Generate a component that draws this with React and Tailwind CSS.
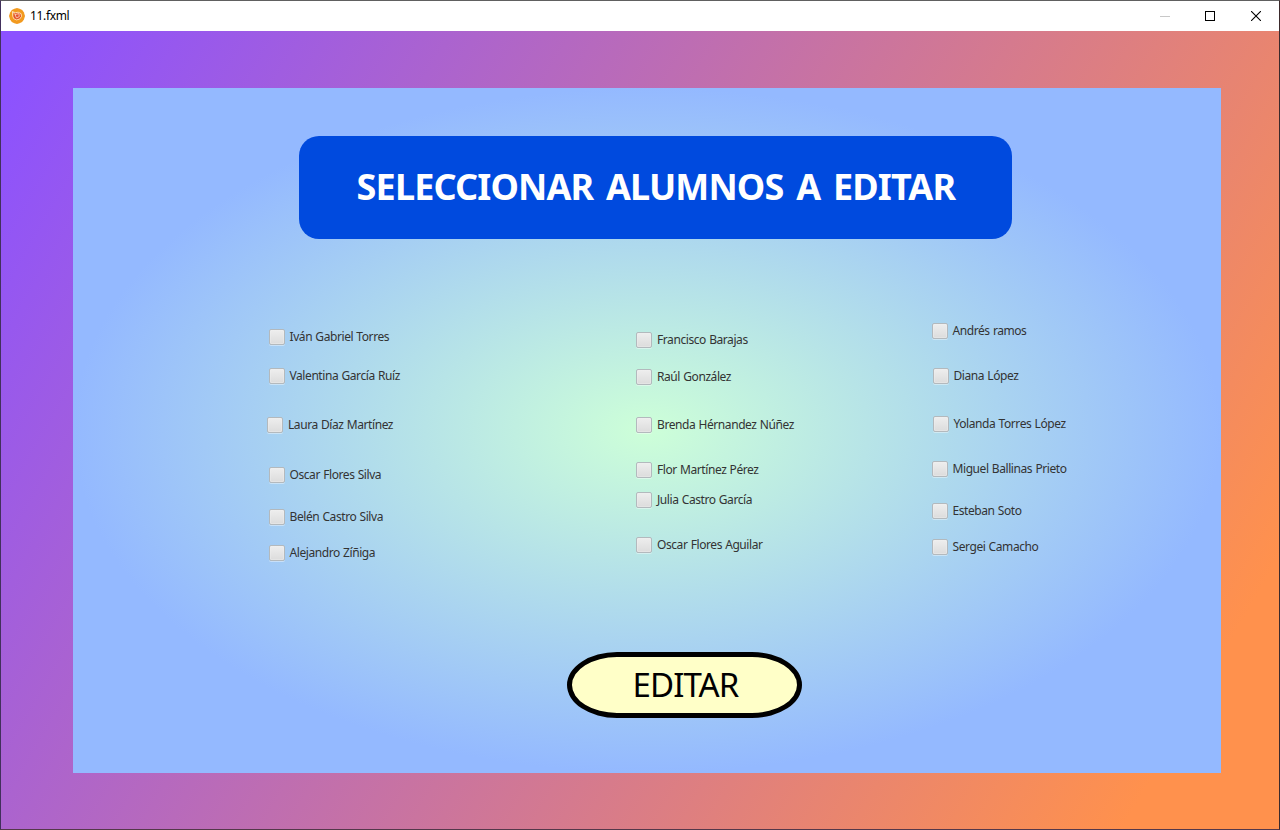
const columns = [
  {
    className: 'ml-[195.5px]',
    students: [
      { name: 'Iván Gabriel Torres', row: 'mt-[3px]' },
      { name: 'Valentina García Ruíz', row: 'mt-[23px]' },
      { name: 'Laura Díaz Martínez', row: 'mt-[33px] -ml-[1.5px]' },
      { name: 'Oscar Flores Silva', row: 'mt-[34px]' },
      { name: 'Belén Castro Silva', row: 'mt-[26px]' },
      { name: 'Alejandro Zíñiga', row: 'mt-[20px]' },
    ],
  },
  {
    className: 'ml-[167.5px]',
    students: [
      { name: 'Francisco Barajas', row: 'mt-[6px]' },
      { name: 'Raúl González', row: 'mt-[21px]' },
      { name: 'Brenda Hérnandez Núñez', row: 'mt-[32px]' },
      { name: 'Flor Martínez Pérez', row: 'mt-[29px]' },
      { name: 'Julia Castro García', row: 'mt-[14px]' },
      { name: 'Oscar Flores Aguilar', row: 'mt-[29px]' },
    ],
  },
  {
    className: 'ml-[95.5px]',
    students: [
      { name: 'Andrés ramos', row: 'mt-[-3px]' },
      { name: 'Diana López', row: 'mt-[29px] ml-px' },
      { name: 'Yolanda Torres López', row: 'mt-[32px] ml-px' },
      { name: 'Miguel Ballinas Prieto', row: 'mt-[29px]' },
      { name: 'Esteban Soto', row: 'mt-[26px]' },
      { name: 'Sergei Camacho', row: 'mt-[20px]' },
    ],
  },
];

function TitleBar() {
  return (
    <header className="flex h-[30px] shrink-0 items-center bg-white">
      <svg className="mb-px ml-2 size-4" viewBox="0 0 16 16" fill="none">
        <path d="M8 0l2.6.7 2.6 1.2 1.6 2.4L16 8l-1.1 3.4-1.8 2.6-2.6 1.3L8 16l-2.7-.8-2.5-1.3-1.7-2.5L0 8l1.1-3.6 1.7-2.5L5.4.7z" fill="#f29a1f" />
        <path d="M4 4.3l2.2.7 2.5-.8 2.8 1.2.7 2.7-1.1 2.6-2.8 1.2-2.9-.8-1.4-2.4.7-2.3z" fill="#e4512b" />
        <path d="M3.4 3.6l3 1.1 2.8-.5 2.9 1.5.4 2.8-1.9 2.6-3.1.8-2.8-1.3-1-2.6z" stroke="#ffe3b8" strokeWidth=".9" />
        <path d="M3.4 3.6l2.6 2.9 4-.9.2 3.1-2.8 1.1-1.4-3.3" stroke="#fff0d8" strokeWidth=".7" />
      </svg>
      <span className="ml-[5px] text-[12px] leading-4 tracking-[-0.35px] text-black">11.fxml</span>
      <div className="ml-auto flex h-full pb-px">
        <button className="flex w-[46px] items-center justify-center" aria-label="Minimizar">
          <svg width="10" height="10" shapeRendering="crispEdges"><path d="M0 5.5h10" stroke="#c8c8c8" /></svg>
        </button>
        <button className="flex w-[45px] items-center justify-center pr-px" aria-label="Maximizar">
          <svg width="10" height="10" shapeRendering="crispEdges"><rect x=".5" y=".5" width="9" height="9" fill="none" stroke="#000" /></svg>
        </button>
        <button className="flex w-[46px] items-center justify-center" aria-label="Cerrar">
          <svg width="10" height="10"><path d="M0 0l10 10M10 0L0 10" stroke="#000" strokeWidth="1.1" /></svg>
        </button>
      </div>
    </header>
  );
}

function Student({ name, row }) {
  return (
    <label className={`flex h-4 items-center gap-[5px] ${row}`}>
      <span className="size-4 shrink-0 rounded-[2px] border border-[#b3b9bd] bg-linear-to-b from-[#eeeeee] to-[#dcdcdc] shadow-[inset_0_0_0_1px_#f1f1f166,0_1px_0_#ffffff66]" />
      <span className="text-[12px] leading-4 tracking-[-0.42px] [word-spacing:0.5px] whitespace-nowrap text-[#333333]">{name}</span>
    </label>
  );
}

export default function App() {
  return (
    <div className="flex h-[830px] w-[1280px] flex-col overflow-hidden border border-t-[#606060] border-r-[#3b2a2c] border-b-[#54384a] border-l-[#42305c] font-['Noto_Sans','Open_Sans',sans-serif]">
      <TitleBar />
      <div className="flex-1 bg-[linear-gradient(120deg,#8c52ff_2%,#ff914d_91%)] pt-[57px] pl-[72px]">
        <main className="flex h-[685px] w-[1148px] flex-col bg-[radial-gradient(ellipse_closest-side,#cdffd8,#94b9ff)]">
          <h1 className="mt-[47.5px] ml-[226.4px] flex h-[103px] w-[713px] shrink-0 items-center justify-center rounded-[20px] bg-[#004ade] text-[36px] leading-none font-bold tracking-[-0.85px] [word-spacing:4.2px] whitespace-nowrap text-white">
            SELECCIONAR ALUMNOS A EDITAR
          </h1>
          <section className="mt-[87.5px] flex h-[240px] shrink-0 items-start">
            {columns.map((column) => (
              <div key={column.className} className={`flex w-[200px] shrink-0 flex-col ${column.className}`}>
                {column.students.map((s) => (
                  <Student key={s.name} {...s} />
                ))}
              </div>
            ))}
          </section>
          <button className="mt-[85.5px] ml-[494px] flex h-[66px] w-[235px] shrink-0 items-center justify-center rounded-[50px/33px] border-[5px] border-black bg-[#ffffc8] pl-0.5 text-[33px] leading-none tracking-[-0.9px] text-black">
            EDITAR
          </button>
        </main>
      </div>
    </div>
  );
}
